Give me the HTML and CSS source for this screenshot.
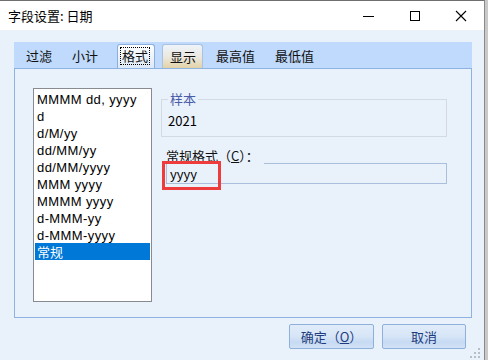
FILE: index.html
```html
<!DOCTYPE html>
<html lang="zh-CN">
<head>
<meta charset="utf-8">
<title>字段设置: 日期</title>
<link rel="stylesheet" href="styles.css">
</head>
<body>
<div class="window">
  <div class="titlebar">
    <div class="title">字段设置: 日期</div>
    <div class="controls">
      <div class="ctl"><svg width="12" height="12" viewBox="0 0 12 12"><line x1="0" y1="6.5" x2="11" y2="6.5" stroke="#000" stroke-width="1"/></svg></div>
      <div class="ctl"><svg width="12" height="12" viewBox="0 0 12 12"><rect x="1.5" y="1.5" width="9" height="9" fill="none" stroke="#000" stroke-width="1"/></svg></div>
      <div class="ctl"><svg width="12" height="12" viewBox="0 0 12 12"><path d="M1 1 L11 11 M11 1 L1 11" stroke="#000" stroke-width="1.1" fill="none"/></svg></div>
    </div>
  </div>
  <div class="body">
    <div class="tabband">
      <div class="tab first">过滤</div>
      <div class="tab">小计</div>
      <div class="tab sel"><span class="focus">格式</span></div>
      <div class="tab hover">显示</div>
      <div class="tab after">最高值</div>
      <div class="tab">最低值</div>
    </div>
    <div class="panel">
      <div class="list">
        <div class="item latin">MMMM dd, yyyy</div>
        <div class="item latin">d</div>
        <div class="item latin">d/M/yy</div>
        <div class="item latin">dd/MM/yy</div>
        <div class="item latin">dd/MM/yyyy</div>
        <div class="item latin">MMM yyyy</div>
        <div class="item latin">MMMM yyyy</div>
        <div class="item latin">d-MMM-yy</div>
        <div class="item latin">d-MMM-yyyy</div>
        <div class="item selected">常规</div>
      </div>
      <div class="right">
        <fieldset class="group">
          <legend>样本</legend>
          <div class="sample">2021</div>
        </fieldset>
        <div class="labelrow">
          <span class="label">常规格式（<u>C</u>）：</span>
          <div class="line"></div>
        </div>
        <div class="inputwrap">
          <div class="input">yyyy</div>
          <div class="redbox"></div>
        </div>
      </div>
    </div>
    <div class="buttons">
      <div class="btn">确定（<u>O</u>）</div>
      <div class="btn">取消</div>
    </div>
  </div>
  <svg class="grip" width="12" height="10" viewBox="0 0 12 10">
    <rect x="8" y="0" width="2" height="2" fill="#b6bec9"/>
    <rect x="4" y="4" width="2" height="2" fill="#b6bec9"/>
    <rect x="8" y="4" width="2" height="2" fill="#b6bec9"/>
    <rect x="0" y="8" width="2" height="2" fill="#b6bec9"/>
    <rect x="4" y="8" width="2" height="2" fill="#b6bec9"/>
    <rect x="8" y="8" width="2" height="2" fill="#b6bec9"/>
  </svg>
</div>
</body>
</html>
```

FILE: styles.css
```css
* { box-sizing: border-box; }

html, body {
  margin: 0;
  padding: 0;
  background: #c9c9c9;
}

body {
  font-family: "Noto Sans CJK SC", "Noto Sans", sans-serif;
  font-size: 13px;
  color: #000;
  width: 488px;
  height: 360px;
  overflow: hidden;
}

.window {
  position: relative;
  width: 485px;
  height: 360px;
  background: #e9f1fb;
  border-top: 1px solid #6f6f6f;
  border-right: 1px solid #8a8a8a;
}

.titlebar {
  height: 29px;
  background: #fff;
  display: flex;
  align-items: center;
  justify-content: space-between;
}

.title {
  padding-left: 8px;
  font-size: 13px;
  line-height: 16px;
}

.controls {
  display: flex;
  height: 29px;
}

.ctl {
  width: 46px;
  height: 29px;
  display: flex;
  align-items: center;
  justify-content: center;
}

.body {
  padding: 12px 12px 0 14px;
}

.tabband {
  height: 26px;
  background: #bfdafc;
  display: flex;
  align-items: flex-end;
  padding-left: 2px;
}

.tab {
  height: 24px;
  line-height: 24px;
  padding: 0 10px;
  font-size: 13px;
  color: #111;
  white-space: nowrap;
}

.tab.sel {
  margin-left: 9px;
  padding: 0 5px 0 3px;
  border: 1px solid #8cb0dc;
  border-bottom: none;
  border-radius: 3px 3px 0 0;
  background: linear-gradient(#fdfeff, #dde9f7);
  line-height: 22px;
}

.focus {
  display: inline-block;
  outline: 1px dotted #000;
  outline-offset: 0;
  line-height: 16px;
  padding: 0 1px;
}

.tab.hover {
  margin-left: 7px;
  padding: 0 6px 0 7px;
  border: 1px solid #a9c2e0;
  border-bottom: none;
  border-radius: 3px 3px 0 0;
  background: linear-gradient(#eef4fb 0%, #ebe7dc 55%, #e3d2a6 100%);
  line-height: 23px;
}

.tab.after {
  margin-left: 3px;
}

.panel {
  height: 250px;
  border: 1px solid #8eb3e1;
  background: #e9f1fb;
  display: flex;
  align-items: flex-start;
  padding: 19px 0 0 18px;
}

.list {
  width: 119px;
  height: 214px;
  background: #fff;
  border: 1px solid #888c92;
  padding: 1px;
}

.item {
  height: 17px;
  line-height: 17px;
  padding-left: 2px;
  font-size: 13px;
  white-space: nowrap;
  overflow: hidden;
}

.item.latin {
  font-family: "Liberation Sans", Arial, sans-serif;
  font-size: 13px;
  letter-spacing: 0.4px;
  line-height: 17px;
  padding-top: 1px;
}

.item.selected {
  background: #0078d7;
  color: #fff;
}

.right {
  width: 286px;
  margin-left: 9px;
  margin-top: 3px;
  display: flex;
  flex-direction: column;
}

.group {
  margin: 0;
  border: 1px solid #d4dae3;
  padding: 6px 5px 7px 5px;
  min-width: 0;
}

.group legend {
  padding: 0 2px;
  margin-left: 1px;
  line-height: 16px;
  color: #4a5ba8;
}

.sample {
  line-height: 16px;
  padding-left: 1px;
}

.labelrow {
  margin-top: 11px;
  margin-left: 5px;
  height: 16px;
  display: flex;
  align-items: stretch;
}

.label {
  line-height: 16px;
  white-space: nowrap;
  color: #111;
}

.line {
  flex: 1;
  margin-left: 5px;
  border-bottom: 1px solid #aabfdc;
}

.inputwrap {
  position: relative;
  margin-left: 5px;
}

.input {
  height: 20px;
  border: 1px solid #aabfdc;
  border-top: none;
  line-height: 19px;
  padding-left: 3px;
}

.redbox {
  position: absolute;
  left: -4px;
  top: -3px;
  width: 59px;
  height: 29px;
  border: 3px solid #ee3b3b;
}

.buttons {
  display: flex;
  justify-content: flex-end;
  gap: 8px;
  margin-top: 6px;
  margin-right: 6px;
}

.btn {
  height: 25px;
  line-height: 23px;
  text-align: center;
  border: 1px solid #8fb0dc;
  border-radius: 2px;
  background: linear-gradient(#e1ecf9 0%, #d6e5f7 50%, #c6daf3 75%, #d3e3f6 100%);
  color: #1e3c7e;
  font-size: 13px;
}

.btn:first-child { width: 85px; }
.btn:last-child { width: 84px; }

.grip {
  position: absolute;
  right: 2px;
  bottom: 2px;
}
```
